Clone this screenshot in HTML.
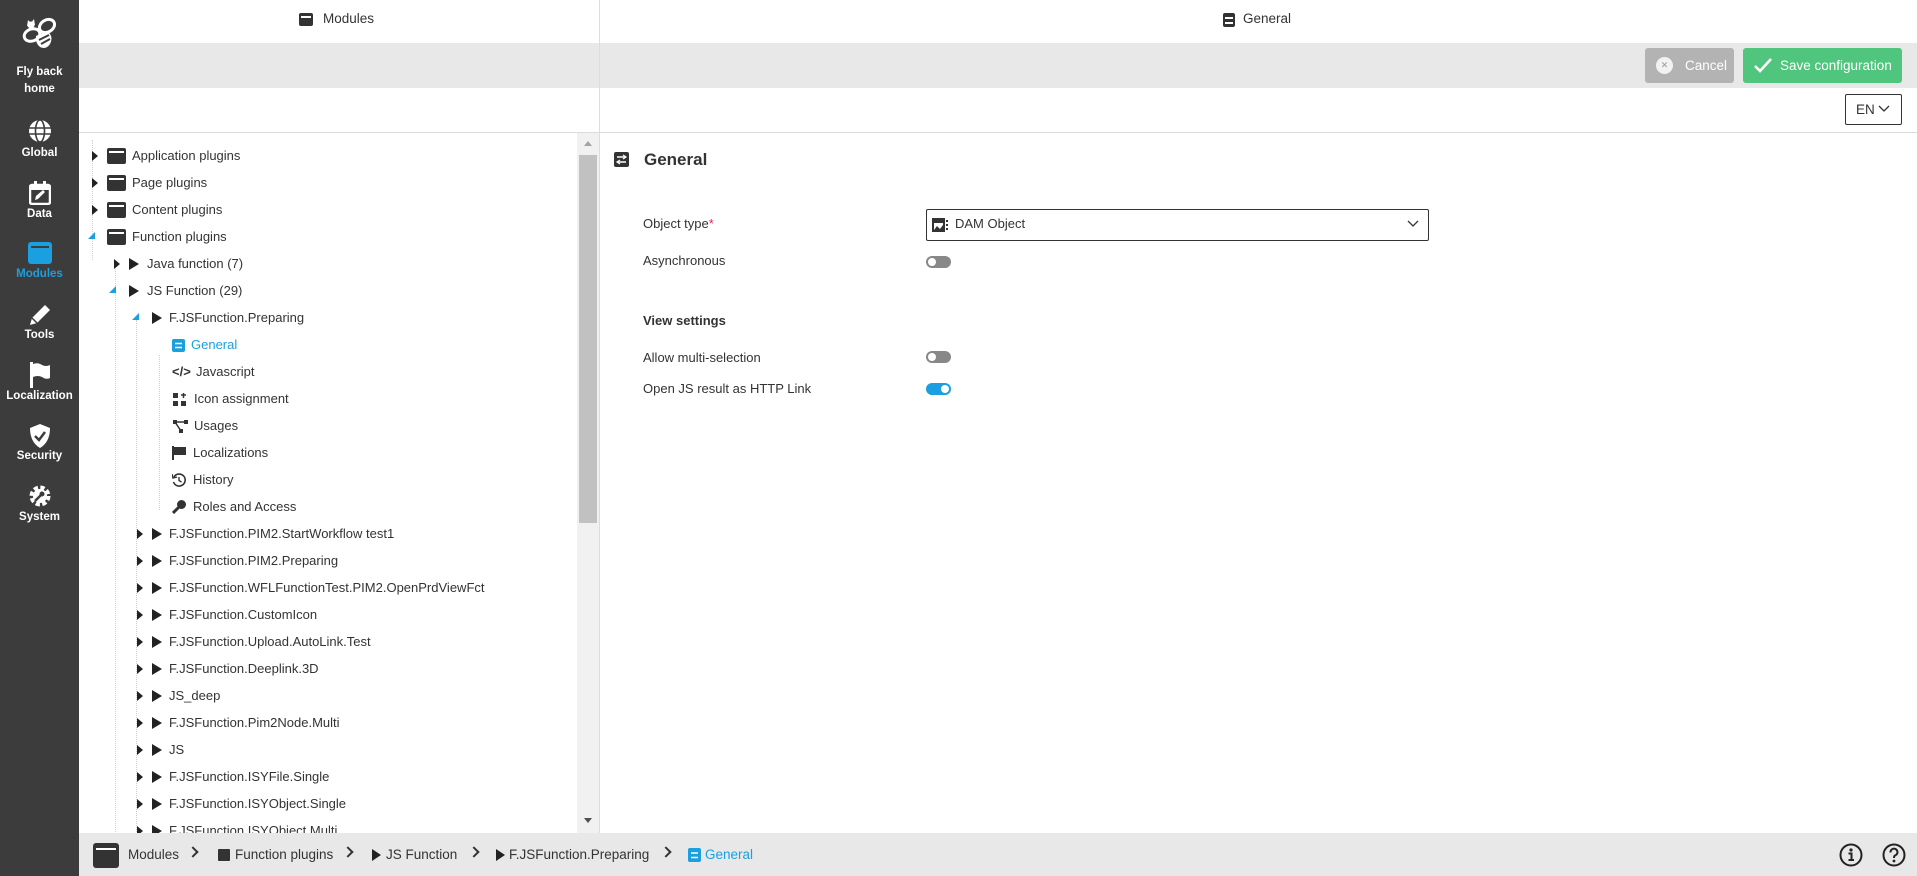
<!DOCTYPE html>
<html><head><meta charset="utf-8"><style>
*{box-sizing:border-box;margin:0;padding:0}
body{width:1917px;height:876px;overflow:hidden;font-family:"Liberation Sans",Arial,sans-serif;color:#333;background:#fff;position:relative;font-size:13px}
.abs{position:absolute}
#side{left:0;top:0;width:79px;height:876px;background:#3c3c3c;color:#fff}
.si{position:absolute;left:0;width:79px;text-align:center;font-weight:bold;font-size:11.5px}
.si svg{display:block;margin:0 auto}
.row{position:absolute;height:20px;line-height:20px;white-space:nowrap;font-size:13px;color:#333}
.tg{position:absolute;top:5px;width:0;height:0;border-top:5px solid transparent;border-bottom:5px solid transparent;border-left:6px solid #222}
.tgo{position:absolute;top:5px;width:0;height:0;border-left:7px solid transparent;border-bottom:7px solid #1a9fe0}
.fold{position:absolute;top:2px;width:19px;height:16px;background:#333;border-radius:2px}
.fold:after{content:"";position:absolute;left:2px;right:2px;top:3px;height:2px;background:#fff}
.tri{position:absolute;top:4px;width:0;height:0;border-top:6px solid transparent;border-bottom:6px solid transparent;border-left:10px solid #222}
.tog{position:absolute;width:25px;height:12px;border-radius:6px;background:#888}
.tog:after{content:"";position:absolute;left:2px;top:2px;width:8px;height:8px;border-radius:50%;background:#fff}
.tog.on{background:#1a9fe0}.tog.on:after{left:15px}
.lbl{position:absolute;left:643px;font-size:13px;color:#333}
.bc{position:absolute;top:845px;font-size:13.5px;color:#333;line-height:20px}
.chev{position:absolute;top:848px;width:8px;height:8px;border-right:2px solid #333;border-top:2px solid #333;transform:rotate(45deg)}
.dl{position:absolute;border-left:1px dotted #d0d0d0}
</style></head><body>
<div id="side" class="abs">
 <div class="si" style="top:14px"><svg width="38" height="38" viewBox="0 0 38 38"><g fill="none" stroke="#fff" stroke-width="3"><ellipse cx="11" cy="21" rx="8" ry="6" transform="rotate(-20 11 21)"/><ellipse cx="26" cy="12" rx="8" ry="6" transform="rotate(-30 26 12)"/></g><path d="M15 22 L26 17 Q33 22 29 30 Q25 36 19 33 Q14 29 15 22Z" fill="#fff"/><path d="M18 26 L28 21 M20 30 L29 25" stroke="#3c3c3c" stroke-width="2"/><path d="M6 12 L7 6 L10 9 L13 5 L14 11 Z" fill="#fff"/><circle cx="10" cy="11" r="3.5" fill="#fff"/></svg></div>
 <div class="si" style="top:64px;line-height:17px">Fly back<br>home</div>
 <div class="si" style="top:119px"><svg width="24" height="24" viewBox="0 0 24 24"><circle cx="12" cy="12" r="11" fill="#fff"/><g stroke="#3c3c3c" stroke-width="1.6" fill="none"><ellipse cx="12" cy="12" rx="4.5" ry="11"/><line x1="1" y1="9" x2="23" y2="9"/><line x1="1" y1="15" x2="23" y2="15"/></g></svg></div>
 <div class="si" style="top:147px">Global</div>
 <div class="si" style="top:181px"><svg width="22" height="24" viewBox="0 0 22 24"><rect x="1" y="4" width="20" height="19" rx="2" fill="none" stroke="#fff" stroke-width="2.5"/><rect x="1" y="4" width="20" height="5" fill="#fff"/><rect x="5" y="0" width="3" height="6" fill="#fff"/><rect x="14" y="0" width="3" height="6" fill="#fff"/><path d="M6 19 L7 15 L14 9 L16 11 L9 18Z" fill="#fff"/></svg></div>
 <div class="si" style="top:208px">Data</div>
 <div class="si" style="top:242px"><svg width="24" height="22" viewBox="0 0 24 22"><rect x="0" y="0" width="24" height="22" rx="3" fill="#1a9fe0"/><rect x="3" y="4" width="18" height="2" fill="#3c3c3c"/></svg></div>
 <div class="si" style="top:268px;color:#1a9fe0">Modules</div>
 <div class="si" style="top:303px"><svg width="24" height="24" viewBox="0 0 24 24"><path d="M2 22 L4 15 L17 2 L22 7 L9 20 Z" fill="#fff"/><path d="M4 15 L9 20" stroke="#3c3c3c" stroke-width="1.5"/></svg></div>
 <div class="si" style="top:329px">Tools</div>
 <div class="si" style="top:362px"><svg width="22" height="26" viewBox="0 0 22 26"><rect x="1" y="0" width="3" height="26" fill="#fff"/><path d="M4 2 Q9 0 13 3 Q17 5 21 3 L21 16 Q17 18 13 15 Q9 13 4 15Z" fill="#fff"/></svg></div>
 <div class="si" style="top:390px">Localization</div>
 <div class="si" style="top:423px"><svg width="22" height="26" viewBox="0 0 22 26"><path d="M11 1 L21 5 Q21 19 11 25 Q1 19 1 5Z" fill="#fff"/><path d="M6 13 L10 17 L16 9" stroke="#3c3c3c" stroke-width="2.5" fill="none"/></svg></div>
 <div class="si" style="top:450px">Security</div>
 <div class="si" style="top:484px"><svg width="24" height="24" viewBox="0 0 24 24"><circle cx="12" cy="12" r="8" fill="none" stroke="#fff" stroke-width="5" stroke-dasharray="4 2.3"/><circle cx="12" cy="12" r="7" fill="#fff"/><path d="M7 17 L13 11" stroke="#3c3c3c" stroke-width="2.5"/><circle cx="14" cy="10" r="2.5" fill="#3c3c3c"/></svg></div>
 <div class="si" style="top:511px">System</div>
</div>

<div class="abs" style="left:299px;top:13px;width:14px;height:13px;background:#333;border-radius:2px"></div>
<div class="abs" style="left:301px;top:16px;width:10px;height:1.5px;background:#fff"></div>
<div class="abs" style="left:323px;top:11px;font-size:13.5px">Modules</div>
<div class="abs" style="left:1223px;top:13px;width:12px;height:14px;background:#333;border-radius:2px"></div>
<div class="abs" style="left:1225px;top:17px;width:8px;height:1.5px;background:#fff"></div>
<div class="abs" style="left:1225px;top:22px;width:8px;height:1.5px;background:#fff"></div>
<div class="abs" style="left:1243px;top:11px;font-size:13.5px">General</div>
<div class="abs" style="left:79px;top:43px;width:1838px;height:45px;background:#e8e8e8"></div>
<div class="abs" style="left:599px;top:0;width:1px;height:833px;background:#ddd"></div>
<div class="abs" style="left:79px;top:132px;width:1838px;height:1px;background:#dcdcdc"></div>

<div class="abs" style="left:1645px;top:48px;width:89px;height:35px;background:#b3b3b3;border-radius:3px;color:#fff;font-size:13.5px;line-height:35px;padding-left:40px">Cancel</div>
<div class="abs" style="left:1656px;top:57px;width:17px;height:17px;border-radius:50%;background:#f2f2f2;color:#999;font-size:9px;text-align:center;line-height:17px">✕</div>
<div class="abs" style="left:1743px;top:48px;width:159px;height:35px;background:#4fc57e;border-radius:3px;color:#fff;font-size:13.5px;line-height:35px;padding-left:37px">Save configuration</div>
<svg class="abs" style="left:1754px;top:58px" width="18" height="15" viewBox="0 0 18 15"><path d="M1 8 L6 13 L17 1" stroke="#fff" stroke-width="2.6" fill="none"/></svg>
<div class="abs" style="left:1845px;top:94px;width:57px;height:31px;border:1px solid #333;border-radius:2px;font-size:13.5px;line-height:29px;padding-left:10px">EN</div>
<svg class="abs" style="left:1878px;top:105px" width="12" height="8" viewBox="0 0 12 8"><path d="M1 1 L6 6 L11 1" stroke="#333" stroke-width="1.3" fill="none"/></svg>

<div class="dl" style="left:92px;top:140px;height:120px"></div>
<div class="dl" style="left:115px;top:262px;height:570px"></div>
<div class="dl" style="left:136px;top:320px;height:512px"></div>
<div class="dl" style="left:159px;top:355px;height:155px"></div>

<div class="row" style="top:146px;left:92px;width:300px"><div class="tg" style="left:0"></div><div class="fold" style="left:15px"></div><span style="position:absolute;left:40px">Application plugins</span></div>
<div class="row" style="top:173px;left:92px;width:300px"><div class="tg" style="left:0"></div><div class="fold" style="left:15px"></div><span style="position:absolute;left:40px">Page plugins</span></div>
<div class="row" style="top:200px;left:92px;width:300px"><div class="tg" style="left:0"></div><div class="fold" style="left:15px"></div><span style="position:absolute;left:40px">Content plugins</span></div>
<div class="row" style="top:227px;left:88px;width:300px"><div class="tgo" style="left:0"></div><div class="fold" style="left:19px"></div><span style="position:absolute;left:44px">Function plugins</span></div>
<div class="row" style="top:254px;left:114px;width:300px"><div class="tg" style="left:0"></div><div class="tri" style="left:15px"></div><span style="position:absolute;left:33px">Java function (7)</span></div>
<div class="row" style="top:281px;left:109px;width:300px"><div class="tgo" style="left:0"></div><div class="tri" style="left:20px"></div><span style="position:absolute;left:38px">JS Function (29)</span></div>
<div class="row" style="top:308px;left:132px;width:300px"><div class="tgo" style="left:0"></div><div class="tri" style="left:20px"></div><span style="position:absolute;left:37px">F.JSFunction.Preparing</span></div>

<div class="row" style="top:335px;left:172px;color:#1a9fe0"><svg style="position:absolute;left:0;top:4px" width="13" height="13" viewBox="0 0 13 13"><rect width="13" height="13" rx="2" fill="#1a9fe0"/><path d="M3 4.5H10M3 8.5H10" stroke="#fff" stroke-width="1.5"/></svg><span style="position:absolute;left:19px">General</span></div>
<div class="row" style="top:362px;left:172px"><span style="position:absolute;left:0;font-weight:bold;font-size:13px">&lt;/&gt;</span><span style="position:absolute;left:24px">Javascript</span></div>
<div class="row" style="top:389px;left:172px"><svg style="position:absolute;left:1px;top:4px" width="14" height="14" viewBox="0 0 14 14"><rect x="0" y="0" width="5" height="5" fill="#333"/><rect x="0" y="8" width="5" height="5" fill="#333"/><rect x="8" y="8" width="5" height="5" fill="#333"/><path d="M8 2H13M10.5 0V5" stroke="#333" stroke-width="1.5"/></svg><span style="position:absolute;left:22px">Icon assignment</span></div>
<div class="row" style="top:416px;left:172px"><svg style="position:absolute;left:1px;top:4px" width="15" height="13" viewBox="0 0 15 13"><rect x="0" y="0" width="4" height="4" fill="#333"/><rect x="11" y="0" width="4" height="4" fill="#333"/><rect x="6" y="9" width="4" height="4" fill="#333"/><path d="M2 2H13M2 2L8 11" stroke="#333" stroke-width="1.5"/></svg><span style="position:absolute;left:22px">Usages</span></div>
<div class="row" style="top:443px;left:172px"><svg style="position:absolute;left:0;top:3px" width="14" height="14" viewBox="0 0 14 14"><rect x="0" y="0" width="2" height="14" fill="#333"/><path d="M2 1H14V9H2Z" fill="#333"/></svg><span style="position:absolute;left:21px">Localizations</span></div>
<div class="row" style="top:470px;left:172px"><svg style="position:absolute;left:0;top:3px" width="14" height="14" viewBox="0 0 14 14"><path d="M2 4A6 6 0 1 1 1.5 9" stroke="#333" stroke-width="1.6" fill="none"/><path d="M0 1L1 5L5 4" stroke="#333" stroke-width="1.4" fill="none"/><path d="M7 4V7.5L9.5 9" stroke="#333" stroke-width="1.4" fill="none"/></svg><span style="position:absolute;left:21px">History</span></div>
<div class="row" style="top:497px;left:172px"><svg style="position:absolute;left:0;top:3px" width="14" height="14" viewBox="0 0 14 14"><circle cx="9.5" cy="4.5" r="4.5" fill="#333"/><path d="M7 7L1 13" stroke="#333" stroke-width="3"/></svg><span style="position:absolute;left:21px">Roles and Access</span></div>

<div class="row" style="top:524px;left:137px;width:400px"><div class="tg"></div><div class="tri" style="left:15px"></div><span style="position:absolute;left:32px">F.JSFunction.PIM2.StartWorkflow test1</span></div>
<div class="row" style="top:551px;left:137px;width:400px"><div class="tg"></div><div class="tri" style="left:15px"></div><span style="position:absolute;left:32px">F.JSFunction.PIM2.Preparing</span></div>
<div class="row" style="top:578px;left:137px;width:400px"><div class="tg"></div><div class="tri" style="left:15px"></div><span style="position:absolute;left:32px">F.JSFunction.WFLFunctionTest.PIM2.OpenPrdViewFct</span></div>
<div class="row" style="top:605px;left:137px;width:400px"><div class="tg"></div><div class="tri" style="left:15px"></div><span style="position:absolute;left:32px">F.JSFunction.CustomIcon</span></div>
<div class="row" style="top:632px;left:137px;width:400px"><div class="tg"></div><div class="tri" style="left:15px"></div><span style="position:absolute;left:32px">F.JSFunction.Upload.AutoLink.Test</span></div>
<div class="row" style="top:659px;left:137px;width:400px"><div class="tg"></div><div class="tri" style="left:15px"></div><span style="position:absolute;left:32px">F.JSFunction.Deeplink.3D</span></div>
<div class="row" style="top:686px;left:137px;width:400px"><div class="tg"></div><div class="tri" style="left:15px"></div><span style="position:absolute;left:32px">JS_deep</span></div>
<div class="row" style="top:713px;left:137px;width:400px"><div class="tg"></div><div class="tri" style="left:15px"></div><span style="position:absolute;left:32px">F.JSFunction.Pim2Node.Multi</span></div>
<div class="row" style="top:740px;left:137px;width:400px"><div class="tg"></div><div class="tri" style="left:15px"></div><span style="position:absolute;left:32px">JS</span></div>
<div class="row" style="top:767px;left:137px;width:400px"><div class="tg"></div><div class="tri" style="left:15px"></div><span style="position:absolute;left:32px">F.JSFunction.ISYFile.Single</span></div>
<div class="row" style="top:794px;left:137px;width:400px"><div class="tg"></div><div class="tri" style="left:15px"></div><span style="position:absolute;left:32px">F.JSFunction.ISYObject.Single</span></div>
<div class="row" style="top:821px;left:137px;width:400px"><div class="tg"></div><div class="tri" style="left:15px"></div><span style="position:absolute;left:32px">F.JSFunction.ISYObject.Multi</span></div>

<div class="abs" style="left:577px;top:133px;width:22px;height:700px;background:#f1f1f1"></div>
<div class="abs" style="left:579px;top:155px;width:18px;height:368px;background:#c1c1c1"></div>
<div class="abs" style="left:584px;top:141px;border-left:4px solid transparent;border-right:4px solid transparent;border-bottom:5px solid #a3a3a3"></div>
<div class="abs" style="left:584px;top:818px;border-left:4px solid transparent;border-right:4px solid transparent;border-top:5px solid #505050"></div>

<svg class="abs" style="left:614px;top:152px" width="15" height="15" viewBox="0 0 15 15"><rect width="15" height="15" rx="2" fill="#333"/><path d="M3 5H12M3 10H12" stroke="#fff" stroke-width="1.6"/><path d="M9 3L12 5L9 7M6 8L3 10L6 12" stroke="#fff" stroke-width="1.2" fill="none"/></svg>
<div class="abs" style="left:644px;top:150px;font-size:17px;font-weight:bold;color:#333">General</div>
<div class="lbl" style="top:216px">Object type<span style="color:#e0245e">*</span></div>
<div class="abs" style="left:926px;top:209px;width:503px;height:32px;border:1px solid #333;border-radius:2px"></div>
<svg class="abs" style="left:932px;top:218px" width="17" height="15" viewBox="0 0 17 15"><rect x="0" y="2" width="13" height="12" fill="#333"/><rect x="2" y="5" width="9" height="7" fill="#fff"/><path d="M2 12L5 8L8 11L11 7V12Z" fill="#333"/><rect x="14" y="2" width="2" height="2" fill="#333"/><rect x="14" y="6" width="2" height="2" fill="#333"/><rect x="14" y="10" width="2" height="2" fill="#333"/><rect x="0" y="0" width="13" height="2" fill="#333"/></svg>
<div class="abs" style="left:955px;top:216px;font-size:13px">DAM Object</div>
<svg class="abs" style="left:1407px;top:220px" width="12" height="8" viewBox="0 0 12 8"><path d="M1 1L6 6L11 1" stroke="#333" stroke-width="1.3" fill="none"/></svg>
<div class="lbl" style="top:253px">Asynchronous</div>
<div class="tog" style="left:926px;top:256px"></div>
<div class="lbl" style="top:313px;font-weight:bold">View settings</div>
<div class="lbl" style="top:350px">Allow multi-selection</div>
<div class="tog" style="left:926px;top:351px"></div>
<div class="lbl" style="top:381px">Open JS result as HTTP Link</div>
<div class="tog on" style="left:926px;top:383px"></div>

<div class="abs" style="left:79px;top:833px;width:1838px;height:43px;background:#e8e8e8"></div>
<div class="abs" style="left:93px;top:843px;width:26px;height:25px;background:#333;border-radius:3px"></div>
<div class="abs" style="left:96px;top:848px;width:20px;height:2px;background:#fff"></div>
<div class="bc" style="left:128px">Modules</div>
<div class="chev" style="left:189px"></div>
<div class="abs" style="left:218px;top:849px;width:12px;height:12px;background:#333;border-radius:1px"></div>
<div class="bc" style="left:235px">Function plugins</div>
<div class="chev" style="left:344px"></div>
<div class="abs" style="left:372px;top:849px;border-top:6px solid transparent;border-bottom:6px solid transparent;border-left:9px solid #222"></div>
<div class="bc" style="left:386px">JS Function</div>
<div class="chev" style="left:470px"></div>
<div class="abs" style="left:496px;top:849px;border-top:6px solid transparent;border-bottom:6px solid transparent;border-left:9px solid #222"></div>
<div class="bc" style="left:509px">F.JSFunction.Preparing</div>
<div class="chev" style="left:662px"></div>
<svg class="abs" style="left:688px;top:848px" width="13" height="14" viewBox="0 0 13 14"><rect width="13" height="14" rx="2" fill="#1a9fe0"/><path d="M3 5H10M3 9.5H10" stroke="#fff" stroke-width="1.5"/></svg>
<div class="bc" style="left:705px;color:#1a9fe0">General</div>
<svg class="abs" style="left:1839px;top:843px" width="24" height="24" viewBox="0 0 24 24"><circle cx="12" cy="12" r="10.5" fill="none" stroke="#222" stroke-width="2"/><circle cx="12" cy="7" r="1.6" fill="#222"/><path d="M9.5 10.5H12.5V17M9.5 17H15" stroke="#222" stroke-width="2" fill="none"/></svg>
<svg class="abs" style="left:1882px;top:843px" width="24" height="24" viewBox="0 0 24 24"><circle cx="12" cy="12" r="10.5" fill="none" stroke="#222" stroke-width="2"/><path d="M8.5 9.5A3.5 3.5 0 1 1 13 12.5Q12 13 12 15" stroke="#222" stroke-width="2" fill="none"/><circle cx="12" cy="18" r="1.4" fill="#222"/></svg>
</body></html>
